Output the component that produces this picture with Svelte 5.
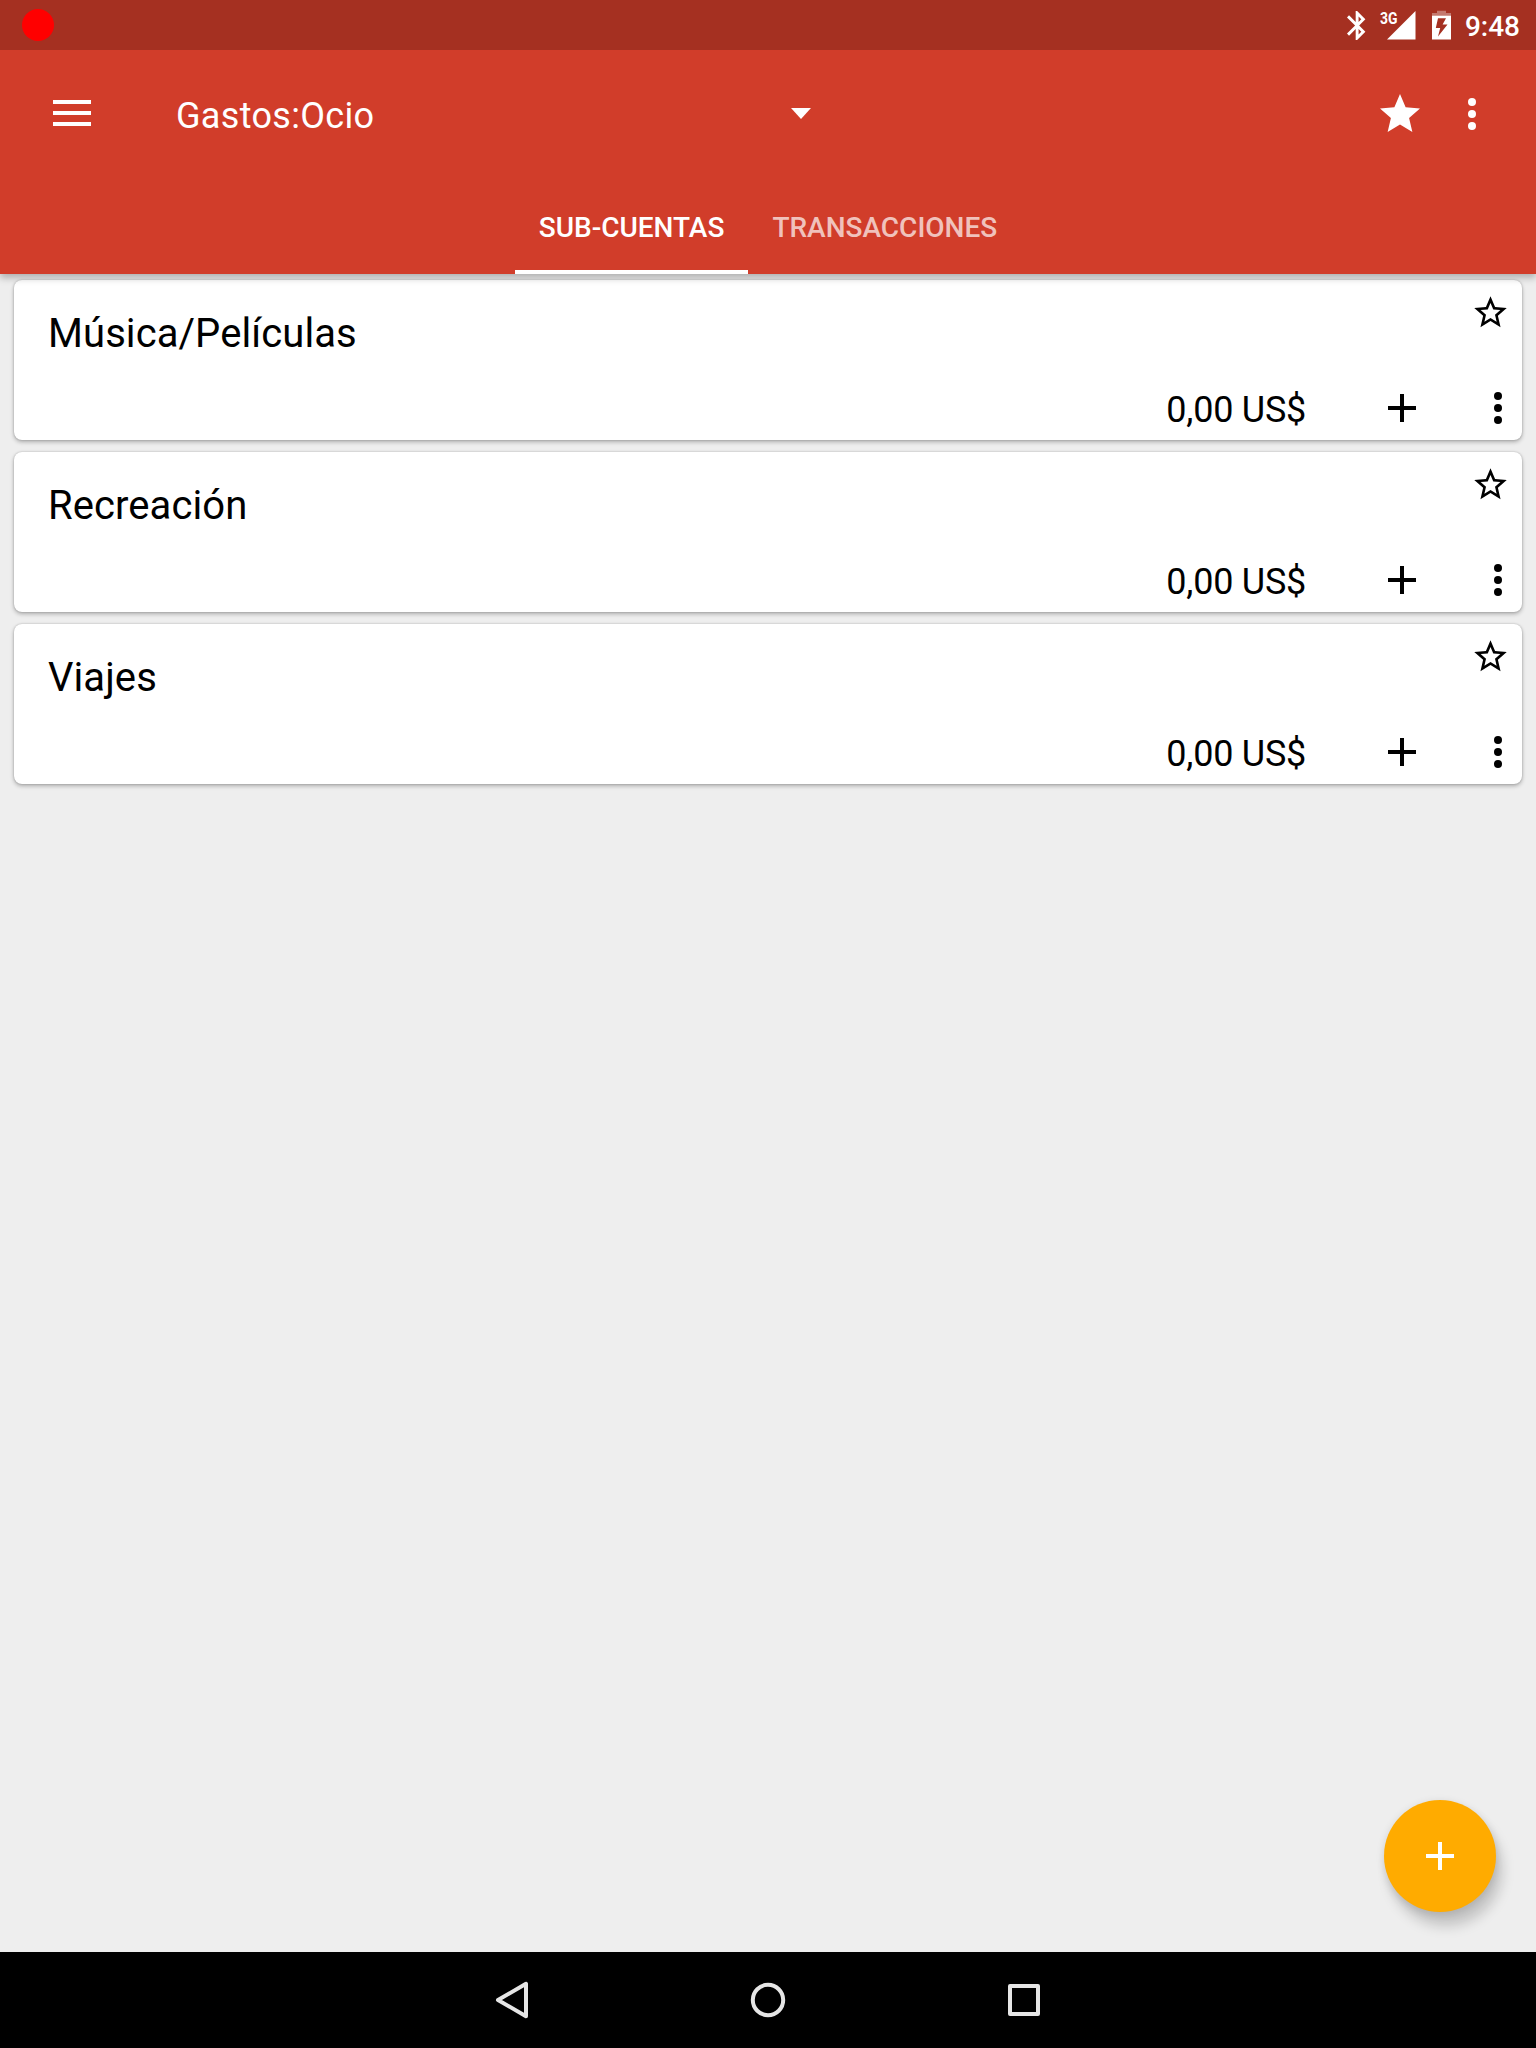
<script lang="ts">
  const accounts = [
    { name: 'Música/Películas', balance: '0,00 US$' },
    { name: 'Recreación', balance: '0,00 US$' },
    { name: 'Viajes', balance: '0,00 US$' },
  ];
  const tabs = ['SUB-CUENTAS', 'TRANSACCIONES'];
  let activeTab = $state(0);
</script>

{#snippet dots()}
  <svg class="icon" viewBox="0 0 24 24"><circle cx="12" cy="6" r="2" /><circle cx="12" cy="12" r="2" /><circle cx="12" cy="18" r="2" /></svg>
{/snippet}

{#snippet plus()}
  <svg class="icon" viewBox="0 0 24 24"><path d="M19 13h-6v6h-2v-6H5v-2h6V5h2v6h6z" /></svg>
{/snippet}

<div class="screen">
  <header>
    <div class="status">
      <span class="record"></span>
      <div class="indicators">
        <svg class="bluetooth" viewBox="5 2 12.71 20"><path d="M17.71 7.71L12 2h-1v7.59L6.41 5 5 6.41 10.59 12 5 17.59 6.41 19 11 14.41V22h1l5.71-5.71-4.3-4.29 4.3-4.29zM13 5.83l1.88 1.88L13 9.59V5.83zm1.88 10.46L13 18.17v-3.76l1.88 1.88z" /></svg>
        <svg class="signal" viewBox="-2 -5 38 40"><path d="M7 29.5L35.5 1v28.5z" /><text x="0" y="13.7" textLength="17.5" lengthAdjust="spacingAndGlyphs">3G</text></svg>
        <svg class="battery" viewBox="0 0 19 30"><path opacity=".35" d="M5 0.7h9V3h5v3H0V3h5z" /><path fill-rule="evenodd" d="M0 5.7h19V29.5H0zM6 8.3L3.8 18h4.4L6 26.5 15.5 14.5H10.6L14 8.3z" /></svg>
        <time>9:48</time>
      </div>
    </div>
    <div class="toolbar">
      <button class="menu" aria-label="Menú"><svg viewBox="0 0 38 26"><path d="M0 0h38v4H0zM0 11h38v4H0zM0 22h38v4H0z" /></svg></button>
      <button class="spinner"><span>Gastos:Ocio</span><svg viewBox="0 0 20 11"><path d="M0 0h20L10 11z" /></svg></button>
      <div class="actions">
        <button aria-label="Favorito"><svg class="icon" viewBox="0 0 24 24"><path d="M12 17.27L18.18 21l-1.64-7.03L22 9.24l-7.19-.61L12 2 9.19 8.63 2 9.24l5.46 4.73L5.82 21z" /></svg></button>
        <button aria-label="Más opciones">{@render dots()}</button>
      </div>
    </div>
    <nav class="tabs">
      {#each tabs as tab, i}
        <button class:active={activeTab === i} onclick={() => (activeTab = i)}>{tab}</button>
      {/each}
    </nav>
  </header>

  <main>
    {#each accounts as account}
      <article>
        <div class="top">
          <h2>{account.name}</h2>
          <button aria-label="Marcar favorito"><svg class="star" viewBox="0 0 24 24"><path d="M22 9.24l-7.19-.62L12 2 9.19 8.63 2 9.24l5.46 4.73L5.82 21 12 17.27 18.18 21l-1.63-7.03L22 9.24zM12 15.4l-3.76 2.27 1-4.28-3.32-2.88 4.38-.38L12 6.1l1.71 4.04 4.38.38-3.32 2.88 1 4.28L12 15.4z" /></svg></button>
        </div>
        <div class="bottom">
          <span class="balance">{account.balance}</span>
          <button class="add" aria-label="Añadir">{@render plus()}</button>
          <button aria-label="Opciones">{@render dots()}</button>
        </div>
      </article>
    {/each}
    <button class="fab" aria-label="Nueva cuenta">{@render plus()}</button>
  </main>

  <footer>
    <svg viewBox="0 0 48 48"><path d="M10 24L38 7.8v32.4z" /></svg>
    <svg viewBox="0 0 48 48"><circle cx="24" cy="24" r="15.2" /></svg>
    <svg viewBox="0 0 48 48"><rect x="10" y="10" width="28" height="28" /></svg>
  </footer>
</div>

<style>
  .screen {
    width: 1536px;
    height: 2048px;
    display: flex;
    flex-direction: column;
    background: #eee;
    color: #000;
    font-family: Roboto, sans-serif;
    overflow: hidden;
  }
  button {
    display: flex;
    align-items: center;
    margin: 0;
    padding: 0;
    border: 0;
    background: none;
    color: inherit;
    font: inherit;
  }
  svg {
    display: block;
    fill: currentColor;
  }
  .icon {
    width: 48px;
    height: 48px;
  }
  header {
    position: relative;
    z-index: 1;
    flex: none;
    background: #d13d2a;
    color: #fff;
    box-shadow: 0 4px 7px rgba(0, 0, 0, 0.26);
  }
  .status {
    height: 50px;
    box-sizing: border-box;
    padding: 0 16px 0 22px;
    display: flex;
    align-items: center;
    justify-content: space-between;
    background: #a53021;
  }
  .record {
    width: 32px;
    height: 32px;
    border-radius: 50%;
    background: #f00;
  }
  .indicators {
    display: flex;
    align-items: center;
  }
  .bluetooth {
    width: 18.4px;
    height: 29px;
    margin-right: 12px;
  }
  .signal {
    width: 38px;
    height: 40px;
    margin-right: 16px;
    font: 700 17px Roboto, sans-serif;
  }
  .battery {
    width: 19px;
    height: 30px;
    margin-right: 14px;
  }
  time {
    font-size: 28px;
    font-weight: 500;
    line-height: 32px;
    padding-top: 3px;
  }
  .toolbar {
    height: 128px;
    box-sizing: border-box;
    padding: 0 40px 0 53px;
    display: flex;
    align-items: center;
  }
  .menu svg {
    width: 38px;
    height: 26px;
  }
  .menu {
    margin-right: 85px;
    padding-bottom: 2px;
  }
  .spinner {
    width: 635px;
    justify-content: space-between;
    font-size: 36px;
    line-height: 42px;
    letter-spacing: 0.33px;
  }
  .spinner span {
    padding-top: 3px;
  }
  .spinner svg {
    width: 20px;
    height: 11px;
    margin-top: -1px;
  }
  .actions {
    margin-left: auto;
    display: flex;
    gap: 24px;
  }
  .tabs {
    height: 96px;
    display: flex;
    justify-content: center;
  }
  .tabs button {
    padding: 6px 24px 0;
    border-bottom: 4px solid transparent;
    font-size: 28px;
    font-weight: 500;
    color: rgba(255, 255, 255, 0.7);
  }
  .tabs .active {
    border-color: #fff;
    color: #fff;
  }
  main {
    position: relative;
    flex: 1;
    padding: 6px 14px 0;
    display: flex;
    flex-direction: column;
    gap: 12px;
  }
  article {
    height: 160px;
    box-sizing: border-box;
    display: flex;
    flex-direction: column;
    justify-content: space-between;
    border-radius: 8px;
    background: #fff;
    box-shadow: 0 2px 4px rgba(0, 0, 0, 0.28), 0 0 2px rgba(0, 0, 0, 0.22);
  }
  .top {
    padding: 12px 12.5px 0 34px;
    display: flex;
    justify-content: space-between;
    align-items: flex-start;
  }
  h2 {
    margin: 18px 0 0;
    font-size: 40px;
    font-weight: 400;
    line-height: 47px;
    letter-spacing: 0.08px;
  }
  .star {
    width: 39px;
    height: 39px;
    margin-top: 0.6px;
  }
  .bottom {
    height: 48px;
    padding-bottom: 8px;
    display: flex;
    justify-content: flex-end;
    align-items: center;
  }
  .balance {
    padding-top: 3px;
    font-size: 36px;
    line-height: 42px;
    letter-spacing: -0.25px;
  }
  .add {
    margin: 0 48px 0 72px;
  }
  .fab {
    position: absolute;
    right: 40px;
    bottom: 40px;
    width: 112px;
    height: 112px;
    justify-content: center;
    border-radius: 50%;
    background: #ffab00;
    color: #fff;
    box-shadow: 6px 14px 13px rgba(0, 0, 0, 0.18), 0 2px 8px rgba(0, 0, 0, 0.12);
  }
  footer {
    flex: none;
    height: 96px;
    display: grid;
    grid-template-columns: repeat(3, 256px);
    justify-content: center;
    align-items: center;
    justify-items: center;
    background: #000;
  }
  footer svg {
    width: 48px;
    height: 48px;
    fill: none;
    stroke: #e6e6e6;
    stroke-width: 4;
    stroke-linejoin: round;
  }
</style>
